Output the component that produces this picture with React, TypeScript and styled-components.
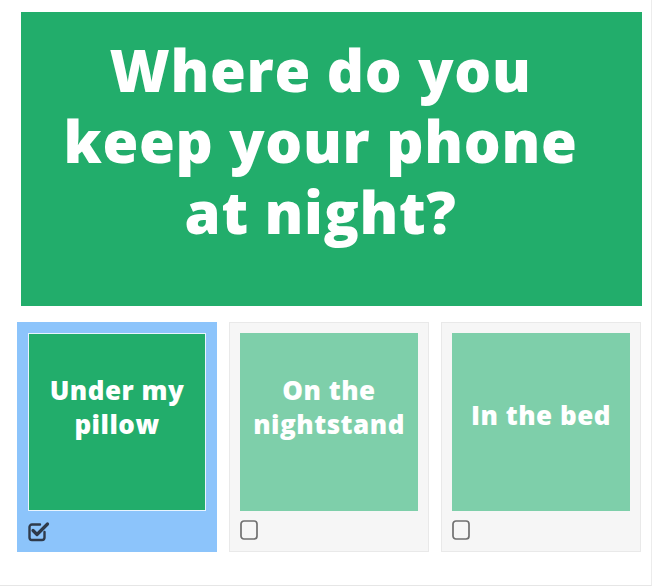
import React from "react";
import styled, { createGlobalStyle } from "styled-components";

const Global = createGlobalStyle`
  html, body { margin: 0; padding: 0; background: #ffffff; }
  body { font-family: "Open Sans", "Noto Sans", sans-serif; }
`;

const Page = styled.div`
  box-sizing: border-box;
  width: 652px;
  height: 586px;
  padding: 12px 0 0 0;
  border-right: 1px solid #ececec;
  border-bottom: 1px solid #e6e6e6;
  background: #ffffff;
`;

const Banner = styled.div`
  box-sizing: border-box;
  margin-left: 21px;
  width: 621px;
  height: 294px;
  background: #22ad6b;
  display: flex;
  align-items: center;
  justify-content: center;
  padding: 0 22px 38px 0;
`;

const Question = styled.h1`
  margin: 0;
  color: #ffffff;
  font-family: "Open Sans", sans-serif;
  font-weight: 800;
  font-size: 58px;
  line-height: 71px;
  text-align: center;
  letter-spacing: 0.7px;
`;

const Options = styled.div`
  display: flex;
  gap: 12px;
  margin: 16px 0 0 17px;
`;

const Card = styled.label<{ $selected?: boolean }>`
  box-sizing: border-box;
  width: 200px;
  height: 230px;
  padding: 10px 11px 0 10px;
  display: flex;
  flex-direction: column;
  gap: 9px;
  background: ${(p) => (p.$selected ? "#8cc4fb" : "#f6f6f6")};
  border: 1px solid ${(p) => (p.$selected ? "#8cc4fb" : "#e9e9e9")};
  cursor: pointer;
`;

const Tile = styled.div<{ $selected?: boolean; $lines: number }>`
  box-sizing: border-box;
  width: 178px;
  height: 178px;
  background: ${(p) => (p.$selected ? "#22ad6b" : "#7ecfaa")};
  border: 1px solid ${(p) => (p.$selected ? "#e8f4ff" : "#7ecfaa")};
  display: flex;
  align-items: center;
  justify-content: center;
  padding-bottom: ${(p) => (p.$lines > 1 ? 30 : 14)}px;
`;

const TileText = styled.span`
  color: #ffffff;
  font-family: "Open Sans", sans-serif;
  font-weight: 800;
  font-size: 26px;
  line-height: 34px;
  text-align: center;
  letter-spacing: 0.5px;
`;

const Box = styled.span`
  display: block;
  width: 22px;
  height: 22px;
`;

const Checked = () => (
  <svg width="22" height="22" viewBox="0 0 22 22">
    <path
      d="M16.5 12 V17.5 a2.5 2.5 0 0 1 -2.5 2.5 H4 a2.5 2.5 0 0 1 -2.5 -2.5 V7 a2.5 2.5 0 0 1 2.5 -2.5 H12"
      fill="none"
      stroke="#2f3a4a"
      strokeWidth="2.4"
      strokeLinecap="round"
    />
    <path
      d="M5 10.5 L9 14.5 L19.5 4"
      fill="none"
      stroke="#2f3a4a"
      strokeWidth="3.2"
      strokeLinecap="round"
      strokeLinejoin="round"
    />
  </svg>
);

const Unchecked = () => (
  <svg width="22" height="22" viewBox="0 0 22 22">
    <rect
      x="1"
      y="1"
      width="16"
      height="18"
      rx="3"
      fill="none"
      stroke="#707070"
      strokeWidth="1.7"
    />
  </svg>
);

const options = [
  { label: ["Under my", "pillow"], selected: true },
  { label: ["On the", "nightstand"], selected: false },
  { label: ["In the bed"], selected: false },
];

export default function App() {
  return (
    <>
      <Global />
      <Page>
        <Banner>
          <Question>
            Where do you
            <br />
            keep your phone
            <br />
            at night?
          </Question>
        </Banner>
        <Options>
          {options.map((o, i) => (
            <Card key={i} $selected={o.selected}>
              <Tile $selected={o.selected} $lines={o.label.length}>
                <TileText>
                  {o.label.map((l, j) => (
                    <React.Fragment key={j}>
                      {j > 0 && <br />}
                      {l}
                    </React.Fragment>
                  ))}
                </TileText>
              </Tile>
              <Box>{o.selected ? <Checked /> : <Unchecked />}</Box>
            </Card>
          ))}
        </Options>
      </Page>
    </>
  );
}
